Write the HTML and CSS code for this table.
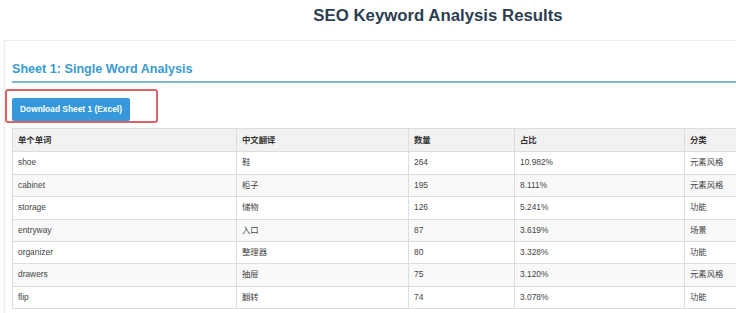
FILE: index.html
```html
<!DOCTYPE html>
<html lang="en">
<head>
<meta charset="utf-8">
<title>SEO Keyword Analysis Results</title>
<link rel="stylesheet" href="styles.css">
</head>
<body>
<div class="page">
  <h1 class="title">SEO Keyword Analysis Results</h1>
  <section class="card">
    <h2 class="sheet-heading">Sheet 1: Single Word Analysis</h2>
    <div class="actions">
      <button class="download-btn" type="button">Download Sheet 1 (Excel)</button>
    </div>
    <div class="highlight"></div>
    <table class="data-table">
      <colgroup>
        <col class="c1"><col class="c2"><col class="c3"><col class="c4"><col class="c5">
      </colgroup>
      <thead>
        <tr><th>单个单词</th><th>中文翻译</th><th>数量</th><th>占比</th><th>分类</th></tr>
      </thead>
      <tbody>
        <tr><td>shoe</td><td>鞋</td><td>264</td><td>10.982%</td><td>元素风格</td></tr>
        <tr><td>cabinet</td><td>柜子</td><td>195</td><td>8.111%</td><td>元素风格</td></tr>
        <tr><td>storage</td><td>储物</td><td>126</td><td>5.241%</td><td>功能</td></tr>
        <tr><td>entryway</td><td>入口</td><td>87</td><td>3.619%</td><td>场景</td></tr>
        <tr><td>organizer</td><td>整理器</td><td>80</td><td>3.328%</td><td>功能</td></tr>
        <tr><td>drawers</td><td>抽屉</td><td>75</td><td>3.120%</td><td>元素风格</td></tr>
        <tr><td>flip</td><td>翻转</td><td>74</td><td>3.078%</td><td>功能</td></tr>
      </tbody>
    </table>
  </section>
</div>
</body>
</html>
```

FILE: styles.css
```css
html, body {
  margin: 0;
  padding: 0;
  background: #ffffff;
  overflow: hidden;
}

body {
  font-family: "Liberation Sans", "Noto Sans CJK SC", sans-serif;
  color: #333333;
}

.page {
  width: 876px;
  padding-top: 6px;
}

.title {
  margin: 0 0 14px;
  text-align: center;
  font-size: 16.8px;
  font-weight: bold;
  line-height: 20px;
  color: #2c3e50;
}

.card {
  position: relative;
  margin: 0 4px;
  background: #ffffff;
  border: 1px solid #ececec;
  box-shadow: 0 0 3px rgba(0, 0, 0, 0.04);
  padding: 21px 7px 20px;
}

.sheet-heading {
  margin: 0;
  padding-bottom: 4px;
  font-size: 12.6px;
  line-height: 15px;
  font-weight: bold;
  color: #3a9ad3;
  border-bottom: 2px solid #80b7cb;
}

.actions {
  padding-top: 15px;
  padding-bottom: 7px;
}

.download-btn {
  display: block;
  height: 23px;
  padding: 0 8px;
  border: none;
  border-radius: 2px;
  background: #3498db;
  color: #ffffff;
  font-family: "Liberation Sans", sans-serif;
  font-size: 8.4px;
  font-weight: bold;
  line-height: 23px;
}

.highlight {
  position: absolute;
  left: 0;
  top: 48px;
  width: 149px;
  height: 30px;
  border: 2px solid #d8636b;
  border-radius: 3px;
}

.data-table {
  width: 852px;
  border-collapse: collapse;
  table-layout: fixed;
  font-size: 8.4px;
}

.c1 { width: 224px; }
.c2 { width: 172px; }
.c3 { width: 106px; }
.c4 { width: 170px; }
.c5 { width: 180px; }

.data-table th,
.data-table td {
  border: 1px solid #dddddd;
  padding: 6px 5px;
  line-height: 9.4px;
  text-align: left;
  white-space: nowrap;
}

.data-table th {
  background: #f2f2f2;
  font-weight: bold;
  color: #333333;
  padding-top: 7px;
}

.data-table td {
  color: #444444;
}

.data-table tbody tr:nth-child(even) {
  background: #f9f9f9;
}
```
